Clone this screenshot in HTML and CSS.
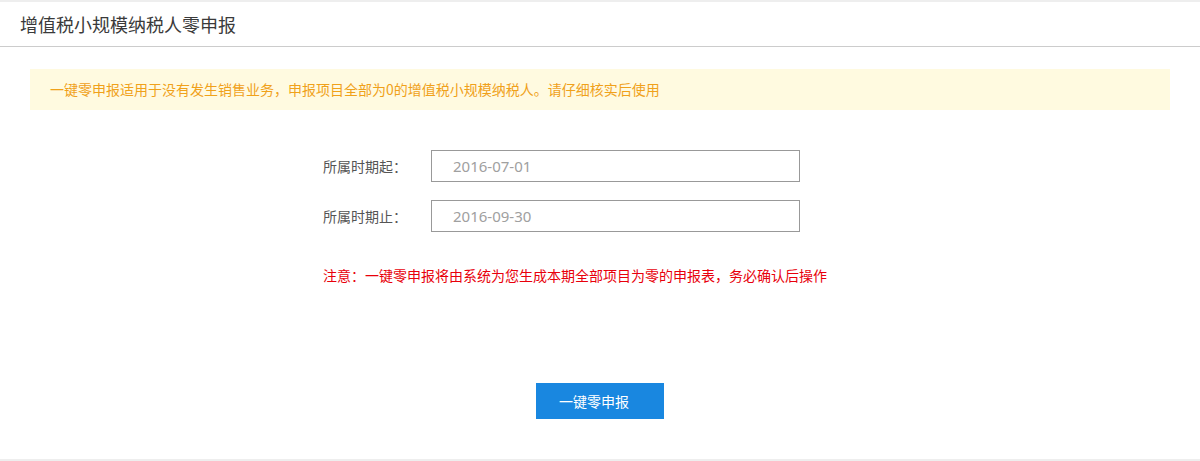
FILE: index.html
```html
<!DOCTYPE html>
<html lang="zh">
<head>
<meta charset="utf-8">
<title>增值税小规模纳税人零申报</title>
<link rel="stylesheet" href="styles.css">
</head>
<body>
<div class="page">
  <div class="header">增值税小规模纳税人零申报</div>
  <div class="notice">一键零申报适用于没有发生销售业务，申报项目全部为0的增值税小规模纳税人。请仔细核实后使用</div>
  <div class="form">
    <div class="row">
      <label class="label">所属时期起：</label>
      <div class="input">2016-07-01</div>
    </div>
    <div class="row">
      <label class="label">所属时期止：</label>
      <div class="input">2016-09-30</div>
    </div>
    <div class="warn">注意：一键零申报将由系统为您生成本期全部项目为零的申报表，务必确认后操作</div>
  </div>
  <div class="actions">
    <button class="btn">一键零申报</button>
  </div>
</div>
</body>
</html>
```
FILE: styles.css
```css
html, body {
  margin: 0;
  padding: 0;
  background: #fff;
}
body {
  font-family: "Noto Sans CJK SC", "Noto Sans", sans-serif;
  color: #333;
}
.page {
  border-top: 2px solid #eeeeee;
  border-bottom: 2px solid #eeeeee;
  height: 457px;
}
.header {
  height: 44px;
  line-height: 44px;
  padding-left: 20px;
  font-size: 18px;
  color: #3a3a3a;
  border-bottom: 1px solid #cccccc;
}
.notice {
  margin: 22px 30px 0 30px;
  height: 41px;
  line-height: 41px;
  padding-left: 20px;
  background: #fffae0;
  color: #f0a11a;
  font-size: 14px;
}
.form {
  padding-left: 323px;
  margin-top: 40px;
  display: flex;
  flex-direction: column;
  gap: 18px;
}
.row {
  display: flex;
  align-items: center;
}
.label {
  width: 108px;
  font-size: 14px;
  color: #555;
}
.input {
  box-sizing: border-box;
  width: 369px;
  height: 32px;
  line-height: 30px;
  border: 1px solid #999;
  padding-left: 21px;
  font-size: 15px;
  color: #a0a0a0;
  font-family: "Noto Sans", sans-serif;
}
.warn {
  margin-top: 16px;
  font-size: 14px;
  line-height: 18px;
  color: #e8000b;
}
.actions {
  display: flex;
  justify-content: center;
  margin-top: 99px;
}
.btn {
  width: 128px;
  height: 36px;
  border: none;
  background: #1987e0;
  color: #fff;
  font-size: 14px;
  font-family: "Noto Sans CJK SC", sans-serif;
  padding: 0 12px 0 0;
}
```
